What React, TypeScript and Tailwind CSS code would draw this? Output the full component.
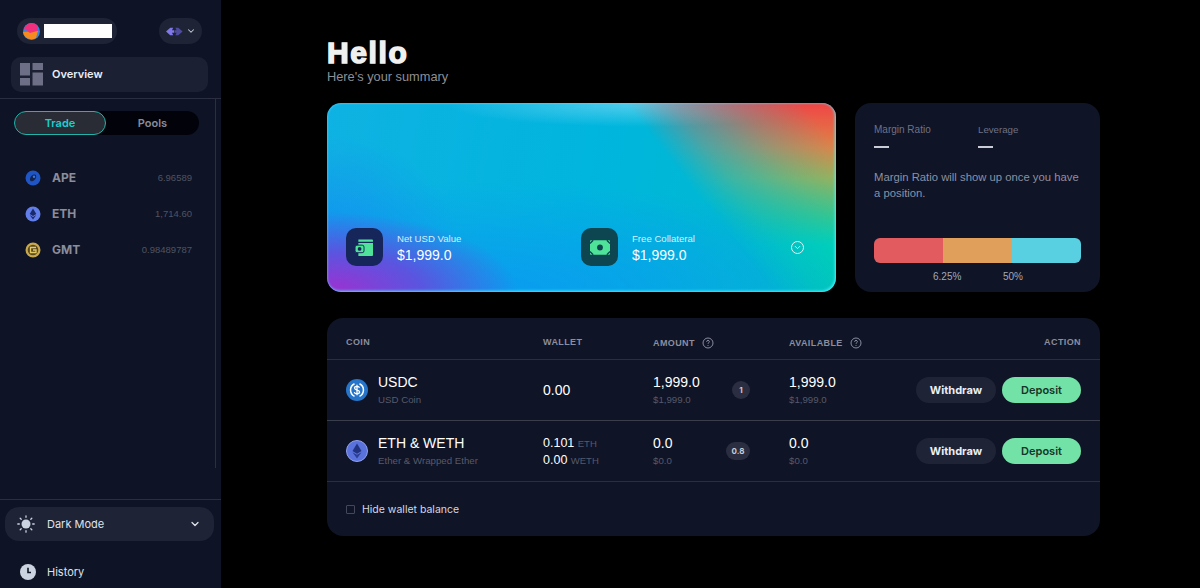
import { ChevronDown } from "lucide-react";

const sans = "font-['Liberation_Sans',Arial,sans-serif]";
const inter = "font-['Inter',sans-serif]";

function OverviewIcon() {
  return (
    <svg width="24" height="24" viewBox="0 0 24 24" fill="#6d6f86">
      <rect x="0" y="1" width="10" height="12.5" />
      <rect x="12.5" y="1" width="10.5" height="7" />
      <rect x="0" y="16" width="10" height="7.5" />
      <rect x="12.5" y="10.5" width="10.5" height="13" />
    </svg>
  );
}

function ChainIcon() {
  return (
    <svg width="17" height="9" viewBox="0 0 20 10">
      <path d="M0 5 5 0.5h3.500L7 3.500h2.500v3H7l1.500 3H5z" fill="#7f78e8" />
      <path d="M19.500 5 14.500 0.500H11L12.500 3.500H10v3h2.500L11 9.500h3.500z" fill="#4f4c9e" />
    </svg>
  );
}

function Avatar() {
  return (
    <svg width="17" height="17" viewBox="0 0 17 17">
      <circle cx="8.500" cy="8.500" r="8.500" fill="#2c8be8" />
      <path d="M0 9a8.500 8.500 0 0 0 13 6l2-7z" fill="#f58a1f" />
      <path d="M1 5.500A8.500 8.500 0 0 1 14 2l1.500 5.500L7 10z" fill="#f0307f" />
    </svg>
  );
}

function ApeIcon() {
  return (
    <svg width="16" height="16" viewBox="0 0 16 16">
      <circle cx="8" cy="8" r="7.500" fill="#1f55c4" />
      <path d="M5 9.500c0-2.500 2-5 4.500-5 1.500 0 2 1.500 1.500 3-.5 2-2.500 4-4.500 3.800C5.500 11.200 5 10.500 5 9.500z" fill="#12244f" />
      <circle cx="9" cy="6.800" r="1.200" fill="#3b78e0" />
    </svg>
  );
}

function EthSmall() {
  return (
    <svg width="16" height="16" viewBox="0 0 16 16">
      <circle cx="8" cy="8" r="7.500" fill="#627eea" />
      <path d="M8 2.500 4.700 8 8 10l3.300-2z" fill="#1b2a6b" />
      <path d="M8 11 4.700 9 8 13.500 11.300 9z" fill="#1b2a6b" />
    </svg>
  );
}

function GmtIcon() {
  return (
    <svg width="16" height="16" viewBox="0 0 16 16">
      <circle cx="8" cy="8" r="7.500" fill="#c9a94f" />
      <circle cx="8" cy="8" r="5.300" fill="#5a4a1e" />
      <path d="M11 5.500H5.500v5H11V8H8" fill="none" stroke="#e3c866" strokeWidth="1.300" />
    </svg>
  );
}

function UsdcIcon() {
  return (
    <svg width="22" height="22" viewBox="0 0 22 22">
      <circle cx="11" cy="11" r="11" fill="#2775ca" />
      <path d="M8.500 4.700a7 7 0 0 0 0 12.600M13.500 4.700a7 7 0 0 1 0 12.600" fill="none" stroke="#fff" strokeWidth="1.500" />
      <path d="M13.500 8.800c-.3-1-1.200-1.500-2.500-1.500-1.400 0-2.500.7-2.500 1.800 0 2.600 5.100 1.300 5.100 3.900 0 1.100-1.200 1.800-2.600 1.800s-2.400-.6-2.700-1.700M11 5.800v10.400" fill="none" stroke="#fff" strokeWidth="1.300" />
    </svg>
  );
}

function EthBig() {
  return (
    <svg width="22" height="22" viewBox="0 0 22 22">
      <circle cx="11" cy="11" r="10.500" fill="#5a72dc" stroke="#8fa2f0" strokeWidth="1" />
      <path d="M11 3.500 6.500 11l4.500 2.700 4.500-2.700z" fill="#22337f" />
      <path d="M11 14.800 6.500 12.200 11 18.500l4.500-6.300z" fill="#2c3f94" />
    </svg>
  );
}

function WalletIcon() {
  return (
    <svg width="19" height="17" viewBox="0 0 20 18" fill="#4fe39a">
      <path d="M3.500 0.500H18a1 1 0 0 1 1 1V3H3.500z" />
      <path d="M3.500 4.200H19V17a1 1 0 0 1-1 1H3.500z" />
      <rect x="0" y="6.500" width="9.500" height="8" rx="2" stroke="#17265a" strokeWidth="1" />
      <circle cx="4.800" cy="10.500" r="2" fill="#17265a" />
    </svg>
  );
}

function CashIcon() {
  return (
    <svg width="20" height="15" viewBox="0 0 22 16">
      <rect x="0" y="0" width="22" height="16" rx="1" fill="#4fe39a" />
      <circle cx="11" cy="8" r="3.200" fill="#0d4550" />
      <path d="M0 3.500 3.500 0M18.500 0 22 3.500M0 12.500 3.500 16M18.500 16 22 12.500" stroke="#0d4550" strokeWidth="1.500" />
    </svg>
  );
}

function HelpIcon() {
  return (
    <svg width="12" height="12" viewBox="0 0 12 12" fill="none" stroke="#8b8e9e" strokeWidth="1">
      <circle cx="6" cy="6" r="5" />
      <path d="M4.600 4.800c0-.9.600-1.400 1.400-1.400s1.400.5 1.400 1.200c0 1.100-1.400 1.100-1.400 2.200" />
      <path d="M6 8.100v.9" />
    </svg>
  );
}

function SunIcon() {
  return (
    <svg width="18" height="18" viewBox="0 0 18 18" stroke="#ccd3e0" strokeWidth="1.300" fill="#ccd3e0" strokeLinecap="round">
      <circle cx="9" cy="9" r="4.500" stroke="none" />
      <path d="M9 .8v1.500M9 15.700v1.500M.8 9h1.500M15.700 9h1.500M3.200 3.200l1 1M13.800 13.800l1 1M3.200 14.800l1-1M13.800 4.200l1-1" />
    </svg>
  );
}

function ClockIcon() {
  return (
    <svg width="16" height="16" viewBox="0 0 16 16">
      <circle cx="8" cy="8" r="8" fill="#ccd3e0" />
      <path d="M8 3.800V8.500h3" fill="none" stroke="#0e1325" strokeWidth="1.600" />
    </svg>
  );
}

const markets = [
  { name: "APE", value: "6.96589", icon: <ApeIcon /> },
  { name: "ETH", value: "1,714.60", icon: <EthSmall /> },
  { name: "GMT", value: "0.98489787", icon: <GmtIcon /> },
];

function Stat({ icon, box, label }: { icon: React.ReactNode; box: string; label: string }) {
  return (
    <div className="flex items-center gap-[14px]">
      <div className={`w-[37px] h-[38px] rounded-[10px] flex items-center justify-center ${box}`}>{icon}</div>
      <div className={`pt-[2px] ${sans}`}>
        <div className="text-[9.6px] leading-[13px] text-[#d3f1fb]">{label}</div>
        <div className="text-sm leading-[20px] text-white">$1,999.0</div>
      </div>
    </div>
  );
}

function Actions() {
  return (
    <div className={`flex justify-end gap-[6px] text-[11px] ${inter}`}>
      <button className="w-[80px] h-[26px] rounded-full bg-[#1f2336] font-bold text-[#eceef4]">Withdraw</button>
      <button className="w-[79px] h-[26px] rounded-full bg-[#73e2a7] font-semibold text-[#14352a]">Deposit</button>
    </div>
  );
}

function Money({ top, sub }: { top: string; sub: string }) {
  return (
    <div>
      <div className="text-sm leading-[18px] text-white">{top}</div>
      <div className="text-[9.7px] leading-[14px] mt-[2px] text-[#565a6c]">{sub}</div>
    </div>
  );
}

function Badge({ text, wide }: { text: string; wide?: boolean }) {
  return (
    <div className={`h-[18px] rounded-full bg-[#2a2e40] flex items-center justify-center text-[8px] font-bold text-[#c9cbd6] ${inter} ${wide ? "w-[24px]" : "w-[18px]"}`}>
      {text}
    </div>
  );
}

export default function App() {
  return (
    <div className={`flex w-full h-[588px] overflow-hidden bg-black ${sans}`}>
      {/* Sidebar */}
      <aside className="w-[221px] shrink-0 h-full bg-[#0e1325] flex flex-col">
        <div className="h-[99px] shrink-0 border-b border-[#2a2e40] px-[11px] pt-[18px]">
          <div className="flex items-center justify-between pl-[6px] pr-[8px]">
            <div className="w-[100px] h-[26px] rounded-full bg-[#1f2336] flex items-center pl-[6px] gap-[4px]">
              <Avatar />
              <div className="w-[68px] h-[14px] bg-white" />
            </div>
            <div className="w-[43px] h-[26px] rounded-full bg-[#1f2336] flex items-center pl-[7px] gap-[3px]">
              <ChainIcon />
              <ChevronDown size={10} strokeWidth={2.500} className="text-[#c9cbd6]" />
            </div>
          </div>
          <div className={`mt-[13px] w-[197px] h-[35px] rounded-[10px] bg-[#1c2033] flex items-center pl-[9px] gap-[8px] pb-[1px] text-[11px] font-semibold text-[#eceef4] ${inter}`}>
            <OverviewIcon />
            Overview
          </div>
        </div>

        <div className="flex-1 min-h-0 flex">
          <div className="w-[215px] shrink-0 pt-[12px]">
            <div className={`ml-[14px] w-[185px] h-[24px] rounded-full bg-[#02030a] flex text-[11px] font-semibold ${inter}`}>
              <div className="w-[92px] rounded-full border border-[#1fb5ac] bg-[#2a2c35] text-[#19cfd0] flex items-center justify-center">Trade</div>
              <div className="flex-1 flex items-center justify-center text-[#8a8b98]">Pools</div>
            </div>
            <div className="mt-[25px] pl-[25px] pr-[23px] flex flex-col">
              {markets.map((m) => (
                <div key={m.name} className="h-[36px] flex items-center">
                  <div className="w-[27px]">{m.icon}</div>
                  <span className={`text-xs font-bold text-[#8a8d9b] ${inter}`}>{m.name}</span>
                  <span className="ml-auto text-[9.500px] text-[#4f5364]">{m.value}</span>
                </div>
              ))}
            </div>
          </div>
          <div className="w-[6px] h-[369px] border-l border-[#2a2e40]" />
        </div>

        <div className={`h-[89px] shrink-0 border-t border-[#2a2e40] pt-[7px] text-[11px] text-[#dfe2ea] ${inter}`}>
          <div className="ml-[5px] w-[209px] h-[34px] rounded-[14px] bg-[#1f2336] flex items-center pl-[12px] pr-[13px] gap-[12px]">
            <SunIcon />
            Dark Mode
            <ChevronDown size={12} strokeWidth={2.500} className="ml-auto" />
          </div>
          <div className="mt-[23px] ml-[20px] flex items-center gap-[11px]">
            <ClockIcon />
            History
          </div>
        </div>
      </aside>

      {/* Main */}
      <main className="flex-1 min-w-0 pl-[106px] pr-[100px] pt-[36px]">
        <h1 className="text-[30px] leading-[34px] font-bold text-[#f0f0f0] [-webkit-text-stroke:1.500px_#f0f0f0] tracking-[1.600px]">Hello</h1>
        <p className="-mt-[1px] text-[12.800px] leading-[16px] text-[#8b8f98]">Here's your summary</p>

        <div className="mt-[18px] flex gap-[19px]">
          <div className="relative w-[509px] h-[189px] rounded-[14px] overflow-hidden bg-[radial-gradient(ellipse_190px_80px_at_0%_100%,#a02fd0_0%,#5a55e0_50%,rgba(30,140,240,0)_100%),radial-gradient(ellipse_420px_110px_at_30%_100%,#0a9bf0_0%,rgba(10,155,240,0)_100%),radial-gradient(ellipse_130px_110px_at_0%_75%,#1590f0_0%,rgba(21,144,240,0)_100%),radial-gradient(ellipse_200px_24px_at_62%_0%,rgba(170,230,255,0.5)_0%,rgba(170,230,255,0)_100%),linear-gradient(100deg,#0fb2e2_0%,#00b5de_50%,#00bcc8_100%)]">
            {/* warm corner of the gradient */}
            <div className="absolute inset-0 bg-[linear-gradient(180deg,#f04545_0%,#dd8548_24%,#aab050_40%,#45c97e_60%,#00dcb0_75%,#00d8a8_100%)] [mask-image:linear-gradient(52deg,transparent_68%,rgba(0,0,0,0.35)_75%,rgba(0,0,0,0.7)_85%,#000_95%)]" />
            <div className="absolute inset-0 rounded-[14px] shadow-[inset_-1px_-1px_3px_0_rgba(80,245,255,0.9),inset_1px_1px_2px_0_rgba(100,200,255,0.35)]" />
            <div className="relative h-full flex items-end pl-[19px] pb-[26px]">
              <div className="w-[235px]">
                <Stat icon={<WalletIcon />} box="bg-[#17265a]" label="Net USD Value" />
              </div>
              <div className="w-[210px]">
                <Stat icon={<CashIcon />} box="bg-[#0d4550]" label="Free Collateral" />
              </div>
              <div className="w-[13px] h-[13px] mb-[12px] rounded-full border border-[#d8f6f6] flex items-center justify-center text-[#d8f6f6]">
                <ChevronDown size={9} strokeWidth={2.500} />
              </div>
            </div>
          </div>

          <div className="w-[245px] h-[189px] rounded-[16px] bg-[#0f1426] px-[19px] pt-[20px]">
            <div className="flex">
              <div className="w-[104px]">
                <div className="text-[10px] leading-[13px] text-[#6f7284]">Margin Ratio</div>
                <div className="mt-[10px] w-[15px] h-[2px] bg-[#c9cbd6]" />
              </div>
              <div>
                <div className="text-[9.700px] leading-[13px] text-[#6f7284]">Leverage</div>
                <div className="mt-[10px] w-[15px] h-[2px] bg-[#c9cbd6]" />
              </div>
            </div>
            <p className="mt-[21px] text-[11.300px] leading-[16px] text-[#8c90a3]">Margin Ratio will show up once you have a position.</p>
            <div className="mt-[37px] h-[25px] rounded-[6px] overflow-hidden flex">
              <div className="flex-1 bg-[#e25c5f]" />
              <div className="flex-1 bg-[#e0a05c]" />
              <div className="flex-1 bg-[#59cfe2]" />
            </div>
            <div className="mt-[7px] flex text-[10px] leading-[13px] text-[#a5a8b6]">
              <span className="ml-[59px] w-[70px]">6.25%</span>
              <span>50%</span>
            </div>
          </div>
        </div>

        {/* Balances */}
        <div className="mt-[26px] h-[218px] rounded-[16px] bg-[#0f1426] overflow-hidden">
          <div className="h-[42px] border-b border-[#2a2e40] pl-[19px] pr-[19px] grid grid-cols-[197px_110px_136px_1fr_auto] text-[9px] font-bold tracking-[0.4px] text-[#8b8e9e]">
            <div className="pt-[18px] leading-[12px]">COIN</div>
            <div className="pt-[18px] leading-[12px]">WALLET</div>
            <div className="pt-[19px] leading-[12px] flex items-start gap-[7px]">AMOUNT <HelpIcon /></div>
            <div className="pt-[19px] leading-[12px] flex items-start gap-[7px]">AVAILABLE <HelpIcon /></div>
            <div className="pt-[18px] leading-[12px]">ACTION</div>
          </div>

          <div className="h-[61px] border-b border-[#3a3d4c] pl-[19px] pr-[19px] grid grid-cols-[197px_110px_136px_1fr_auto] items-center">
            <div className="flex items-center gap-[10px]">
              <UsdcIcon />
              <Money top="USDC" sub="USD Coin" />
            </div>
            <div className="text-sm text-white">0.00</div>
            <div className="flex items-center justify-between w-[97px]">
              <Money top="1,999.0" sub="$1,999.0" />
              <Badge text="1" />
            </div>
            <Money top="1,999.0" sub="$1,999.0" />
            <Actions />
          </div>

          <div className="h-[61px] border-b border-[#2a2e40] pl-[19px] pr-[19px] grid grid-cols-[197px_110px_136px_1fr_auto] items-center">
            <div className="flex items-center gap-[10px]">
              <EthBig />
              <Money top="ETH & WETH" sub="Ether & Wrapped Ether" />
            </div>
            <div className="pt-[2px] text-[12.500px] leading-[17px] text-white">
              <div>0.101 <span className="text-[9.500px] text-[#565a6c]">ETH</span></div>
              <div>0.00 <span className="text-[9.500px] text-[#565a6c]">WETH</span></div>
            </div>
            <div className="flex items-center justify-between w-[97px]">
              <Money top="0.0" sub="$0.0" />
              <Badge text="0.8" wide />
            </div>
            <Money top="0.0" sub="$0.0" />
            <Actions />
          </div>

          <label className={`mt-[20px] ml-[19px] flex items-center gap-[7px] text-[10.500px] text-[#d5d8e2] ${inter}`}>
            <span className="w-[9px] h-[9px] rounded-[1px] border border-[#45485a]" />
            Hide wallet balance
          </label>
        </div>
      </main>
    </div>
  );
}
